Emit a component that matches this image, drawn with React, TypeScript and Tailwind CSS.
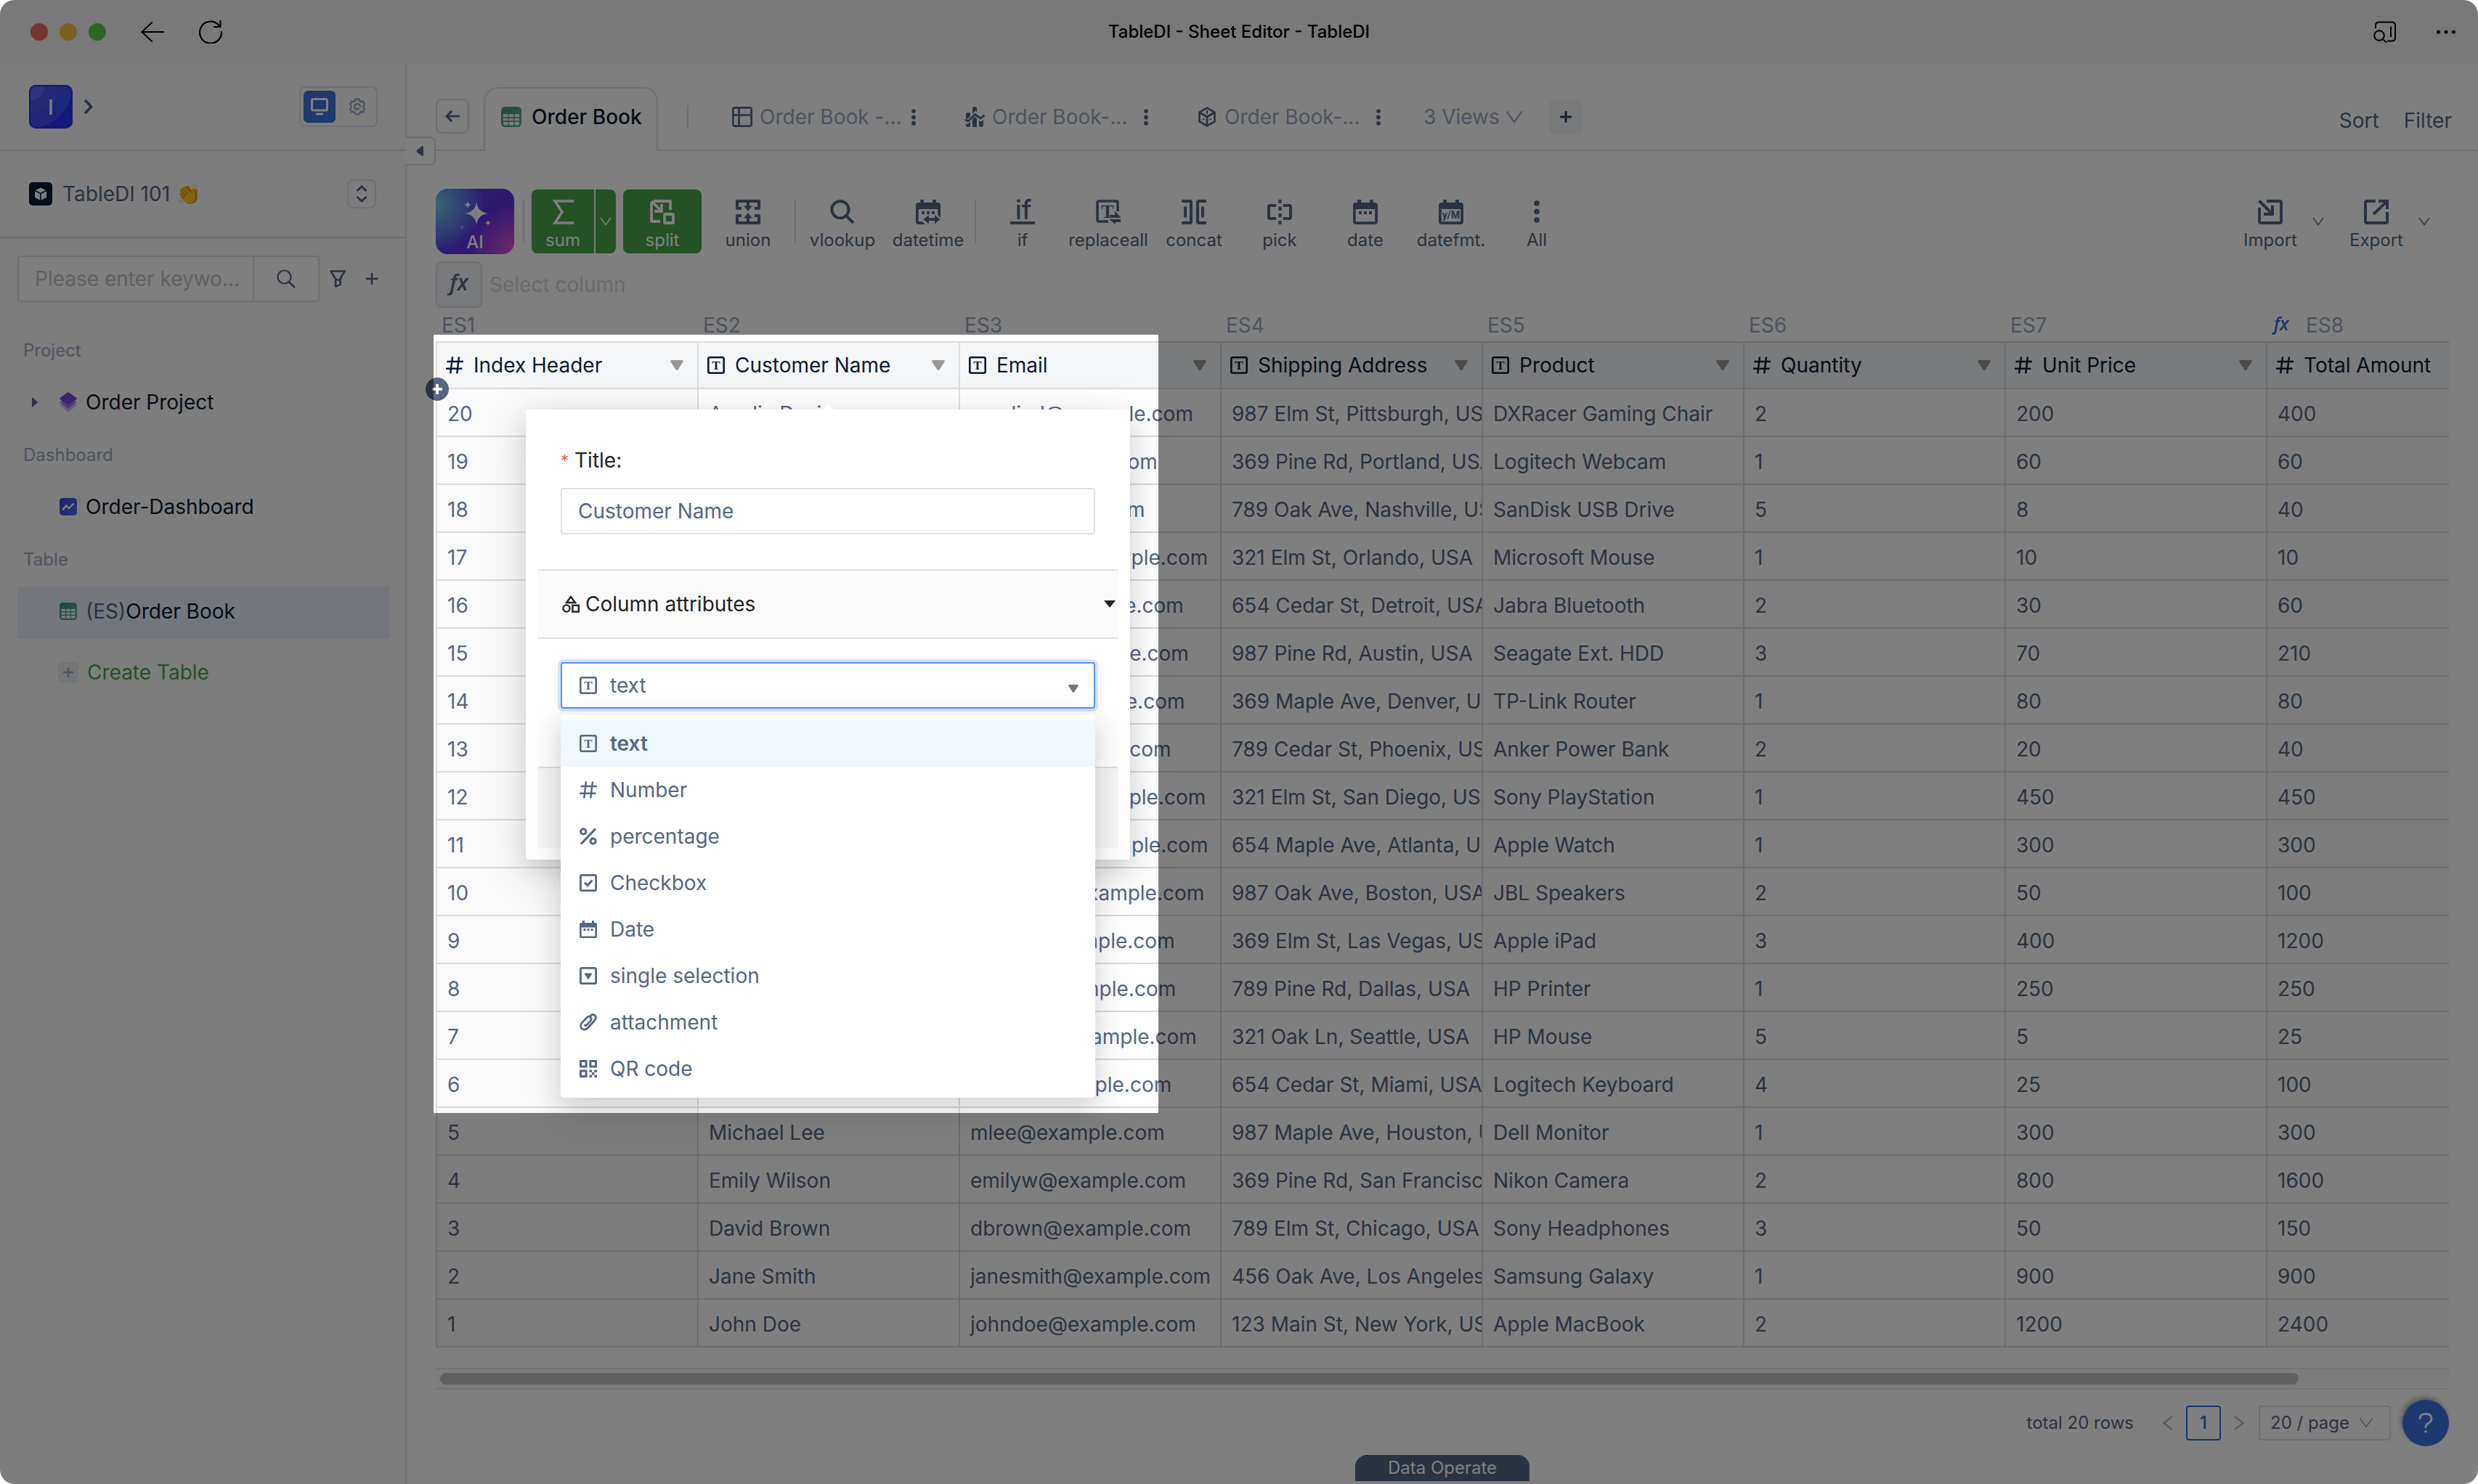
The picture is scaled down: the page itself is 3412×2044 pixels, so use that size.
import { useState } from 'react';
import type { ReactNode } from 'react';

type IconProps = { className?: string };

type ColumnType = 'number' | 'text';

type Column = {
  code: string;
  title: string;
  type: ColumnType;
  formula?: boolean;
};

const columns: Column[] = [
  { code: 'ES1', title: 'Index Header', type: 'number' },
  { code: 'ES2', title: 'Customer Name', type: 'text' },
  { code: 'ES3', title: 'Email', type: 'text' },
  { code: 'ES4', title: 'Shipping Address', type: 'text' },
  { code: 'ES5', title: 'Product', type: 'text' },
  { code: 'ES6', title: 'Quantity', type: 'number' },
  { code: 'ES7', title: 'Unit Price', type: 'number' },
  { code: 'ES8', title: 'Total Amount', type: 'number', formula: true },
];

const rows = [
  ['20', 'Amelia Davis', 'ameliad@example.com', '987 Elm St, Pittsburgh, USA', 'DXRacer Gaming Chair', '2', '200', '400'],
  ['19', 'Liam Hill', 'liam@example.com', '369 Pine Rd, Portland, USA', 'Logitech Webcam', '1', '60', '60'],
  ['18', 'Elli Hill', 'elli@example.com', '789 Oak Ave, Nashville, USA', 'SanDisk USB Drive', '5', '8', '40'],
  ['17', 'Charlotte Lee', 'charlottel@example.com', '321 Elm St, Orlando, USA', 'Microsoft Mouse', '1', '10', '10'],
  ['16', 'Oliver Brown', 'oliverb@example.com', '654 Cedar St, Detroit, USA', 'Jabra Bluetooth', '2', '30', '60'],
  ['15', 'Sophia Till', 'sophiat@example.com', '987 Pine Rd, Austin, USA', 'Seagate Ext. HDD', '3', '70', '210'],
  ['14', 'Henry Clark', 'henryc@example.com', '369 Maple Ave, Denver, USA', 'TP-Link Router', '1', '80', '80'],
  ['13', 'Noah Lee', 'noahl@example.com', '789 Cedar St, Phoenix, USA', 'Anker Power Bank', '2', '20', '40'],
  ['12', 'Benjamin Lee', 'benjamin@example.com', '321 Elm St, San Diego, USA', 'Sony PlayStation', '1', '450', '450'],
  ['11', 'Emma Tho', 'emmatho@example.com', '654 Maple Ave, Atlanta, USA', 'Apple Watch', '1', '300', '300'],
  ['10', 'James Ma', 'jamesma@example.com', '987 Oak Ave, Boston, USA', 'JBL Speakers', '2', '50', '100'],
  ['9', 'Olivia Till', 'oliviat@example.com', '369 Elm St, Las Vegas, USA', 'Apple iPad', '3', '400', '1200'],
  ['8', 'Daniel Hall', 'daniel@example.com', '789 Pine Rd, Dallas, USA', 'HP Printer', '1', '250', '250'],
  ['7', 'Jessica Hall', 'jessicah@example.com', '321 Oak Ln, Seattle, USA', 'HP Mouse', '5', '5', '25'],
  ['6', 'Sarah King', 'sarah@example.com', '654 Cedar St, Miami, USA', 'Logitech Keyboard', '4', '25', '100'],
  ['5', 'Michael Lee', 'mlee@example.com', '987 Maple Ave, Houston, USA', 'Dell Monitor', '1', '300', '300'],
  ['4', 'Emily Wilson', 'emilyw@example.com', '369 Pine Rd, San Francisco, USA', 'Nikon Camera', '2', '800', '1600'],
  ['3', 'David Brown', 'dbrown@example.com', '789 Elm St, Chicago, USA', 'Sony Headphones', '3', '50', '150'],
  ['2', 'Jane Smith', 'janesmith@example.com', '456 Oak Ave, Los Angeles, USA', 'Samsung Galaxy', '1', '900', '900'],
  ['1', 'John Doe', 'johndoe@example.com', '123 Main St, New York, USA', 'Apple MacBook', '2', '1200', '2400'],
];

/* ---------- icons ---------- */

function TextIcon({ className }: IconProps) {
  return (
    <svg viewBox="0 0 24 24" className={className} fill="currentColor">
      <rect x="1.3" y="1.3" width="21.4" height="21.4" rx="2" fill="none" stroke="currentColor" strokeWidth="2.6" />
      <text x="12" y="17.5" textAnchor="middle" fontSize="17" fontWeight="700" fontFamily="Liberation Serif, serif">T</text>
    </svg>
  );
}

function HashIcon({ className }: IconProps) {
  return (
    <svg viewBox="0 0 24 24" className={className} fill="none" stroke="currentColor" strokeWidth="2.4">
      <path d="M1.5 7H24M0 16.8H22.5M9 0.5L6.2 23.5M18 0.5L15.2 23.5" />
    </svg>
  );
}

function PercentIcon({ className }: IconProps) {
  return (
    <svg viewBox="0 0 24 24" className={className} fill="none" stroke="currentColor" strokeWidth="3">
      <circle cx="5.2" cy="5.4" r="3.6" />
      <circle cx="18.6" cy="18.6" r="3.6" />
      <path d="M22 1.5L2 22.5" strokeWidth="3.2" />
    </svg>
  );
}

function CheckboxIcon({ className }: IconProps) {
  return (
    <svg viewBox="0 0 24 24" className={className} fill="none" stroke="currentColor">
      <rect x="1.4" y="1.4" width="21.2" height="21.2" rx="1.6" strokeWidth="2.8" />
      <path d="M7 11.5L11 15.5L17.5 8.5" strokeWidth="3" />
    </svg>
  );
}

function DateSmallIcon({ className }: IconProps) {
  return (
    <svg viewBox="0 0 24 24" className={className} fill="currentColor">
      <path fillRule="evenodd" d="M2 3H4V0H7V3H17V0H20V3H22A2 2 0 0 1 24 5V22A2 2 0 0 1 22 24H2A2 2 0 0 1 0 22V5A2 2 0 0 1 2 3ZM2.6 9.4V21.4H21.4V9.4Z" />
      <path d="M5.5 11H8.5V14H5.5ZM10.5 11H13.5V14H10.5ZM15.5 11H18.5V14H15.5Z" />
    </svg>
  );
}

function SingleSelectIcon({ className }: IconProps) {
  return (
    <svg viewBox="0 0 24 24" className={className} fill="currentColor">
      <rect x="1.4" y="1.4" width="21.2" height="21.2" rx="1.6" fill="none" stroke="currentColor" strokeWidth="2.8" />
      <path d="M7 9H17L12 16.5Z" strokeLinejoin="round" stroke="currentColor" strokeWidth="1" />
    </svg>
  );
}

function AttachmentIcon({ className }: IconProps) {
  return (
    <svg viewBox="0 0 24 24" className={className} fill="none" stroke="currentColor" strokeWidth="2.8" strokeLinecap="round">
      <path d="M14.5 3.6C17 0.8 20.2 1 21.6 3C23 5 22.6 7.6 20.6 9.8L11.4 19.8C8.8 22.6 5.4 23 3.2 20.8C1 18.6 1 15.2 3.4 12.6L10 5.6C11.8 3.8 14.2 3.8 15.4 5.4C16.6 7 16.4 8.8 15 10.4L9.6 16C8.8 16.8 7.8 16.6 7.4 16" />
    </svg>
  );
}

function QrIcon({ className }: IconProps) {
  return (
    <svg viewBox="0 0 24 24" className={className} fill="currentColor">
      <path fillRule="evenodd" d="M0 0H10.6V10.6H0ZM3 3V7.6H7.6V3ZM13.4 0H24V10.6H13.4ZM16.4 3V7.6H21V3ZM0 13.4H10.6V24H0ZM3 16.4V21H7.6V16.4Z" />
      <path d="M13.4 13.4H17V17H13.4ZM20.4 13.4H24V17H20.4ZM17 17H20.4V20.4H17ZM13.4 20.4H17V24H13.4ZM20.4 20.4H24V24H20.4Z" />
    </svg>
  );
}

function SheetIcon({ className }: IconProps) {
  return (
    <svg viewBox="0 0 24 24" className={className}>
      <defs>
        <linearGradient id="sheet" x1="0" y1="0" x2="1" y2="1">
          <stop offset="0" stopColor="#3f8f88" />
          <stop offset="1" stopColor="#5cb88c" />
        </linearGradient>
      </defs>
      <rect width="24" height="24" rx="4.5" fill="url(#sheet)" />
      <path
        fill="#f4fbf8"
        d="M2.5 8.8H8V12H2.5ZM9.2 8.8H14.8V12H9.2ZM16 8.8H21.5V12H16ZM2.5 13.4H8V16.6H2.5ZM9.2 13.4H14.8V16.6H9.2ZM16 13.4H21.5V16.6H16ZM2.5 18H8V21.8H4.5Q2.5 21.8 2.5 19.8ZM9.2 18H14.8V21.8H9.2ZM16 18H21.5V19.8Q21.5 21.8 19.5 21.8H16Z"
      />
    </svg>
  );
}

function Caret({ className }: IconProps) {
  return (
    <svg viewBox="0 0 18 14" className={className} fill="currentColor">
      <path d="M1.5 0H16.5Q18.6 0.6 17.4 2.6L10.6 13Q9 14.8 7.4 13L0.6 2.6Q-0.6 0.6 1.5 0Z" />
    </svg>
  );
}

function ThinChevron({ className }: IconProps) {
  return (
    <svg viewBox="0 0 24 18" className={className} fill="none" stroke="currentColor" strokeWidth="2">
      <path d="M1.5 1.5L12 16L22.5 1.5" />
    </svg>
  );
}

function Dots({ className }: IconProps) {
  return (
    <svg viewBox="0 0 8 30" className={className} fill="currentColor">
      <circle cx="4" cy="4" r="3.8" />
      <circle cx="4" cy="15" r="3.8" />
      <circle cx="4" cy="26" r="3.8" />
    </svg>
  );
}

function Fx({ className }: IconProps) {
  return (
    <svg viewBox="0 0 32 32" className={className} fill="currentColor" aria-hidden="true">
      <text x="16" y="24" textAnchor="middle" fontSize="30" fontStyle="italic" fontWeight="600" fontFamily="Open Sans, Noto Sans, sans-serif">fx</text>
    </svg>
  );
}

function Glyph({ children }: { children: ReactNode }) {
  return (
    <svg viewBox="0 0 34 34" className="size-[34px] overflow-visible" fill="none" stroke="currentColor" strokeWidth="4">
      {children}
    </svg>
  );
}

function CalendarBody() {
  return (
    <path
      stroke="none"
      fill="currentColor"
      fillRule="evenodd"
      d="M4 4H6V0H11V4H23V0H28V4H30A4 4 0 0 1 34 8V30A4 4 0 0 1 30 34H4A4 4 0 0 1 0 30V8A4 4 0 0 1 4 4ZM3.8 13V30.2H30.2V13Z"
    />
  );
}

const glyphs: Record<string, ReactNode> = {
  sum: (
    <Glyph>
      <path d="M32 2H6L16 17L6 32H32" strokeWidth="3.6" />
    </Glyph>
  ),
  split: (
    <Glyph>
      <path d="M5 2H28V14M2 4V30H14" strokeWidth="3.8" strokeLinejoin="round" />
      <path d="M2 2L15 15M6.5 16H16V6" strokeWidth="3.8" />
      <rect x="20" y="20" width="12" height="12" rx="1" strokeWidth="3.8" />
    </Glyph>
  ),
  union: (
    <Glyph>
      <path d="M8 12H2V2H32V12H26M8 22H2V32H32V22H26" strokeLinejoin="round" />
      <path d="M17 2V10M17 32V24" />
      <path d="M11 8.5H23L17 16ZM11 25.5H23L17 18Z" fill="currentColor" stroke="none" />
    </Glyph>
  ),
  vlookup: (
    <Glyph>
      <circle cx="14" cy="13.6" r="11.6" />
      <path d="M22 22L32 32" />
    </Glyph>
  ),
  datetime: (
    <Glyph>
      <path d="M4 4H6V0H11V4H23V0H28V4H30A4 4 0 0 1 34 8V25L30.2 21V13H3.8V30.2H9L12.5 34H4A4 4 0 0 1 0 30V8A4 4 0 0 1 4 4Z" fill="currentColor" stroke="none" />
      <path d="M8 16H12V20H8ZM15 16H19V20H15ZM22 16H26V20H22Z" fill="currentColor" stroke="none" />
      <path d="M15 27.2H29" />
      <path d="M10.5 27.2L18 21V33.4ZM33.5 27.2L26 21V33.4Z" fill="currentColor" stroke="none" />
    </Glyph>
  ),
  if: (
    <Glyph>
      <path d="M0 32H34" />
      <text x="18" y="27" textAnchor="middle" fontSize="36" fontWeight="500" fontFamily="Inter, sans-serif" fill="currentColor" stroke="none">if</text>
    </Glyph>
  ),
  replaceall: (
    <Glyph>
      <path d="M17 30H4Q2 30 2 28V4Q2 2 4 2H28Q30 2 30 4V16" strokeWidth="3.6" />
      <text x="16" y="24.5" textAnchor="middle" fontSize="26" fontWeight="700" fontFamily="Liberation Serif, serif" fill="currentColor" stroke="none">T</text>
      <path d="M19 25V21H26V16L34 24V25ZM34 27V31H27V34L19 28V27Z" fill="currentColor" stroke="none" />
    </Glyph>
  ),
  concat: (
    <Glyph>
      <path d="M0 2H11.5Q13 2 13 3.5V30.5Q13 32 11.5 32H0M34 2H23.5Q22 2 22 3.5V30.5Q22 32 23.5 32H34" />
      <path d="M5 11V23M29 11V23" strokeLinecap="round" />
    </Glyph>
  ),
  pick: (
    <Glyph>
      <path d="M12 8H4Q2 8 2 10V24Q2 26 4 26H12M22 8H30Q32 8 32 10V24Q32 26 30 26H22" />
      <path d="M17.5 0V5M17.5 9.5V15M17.5 19V24.5M17.5 29V34" strokeWidth="4.4" />
    </Glyph>
  ),
  date: (
    <Glyph>
      <CalendarBody />
      <path d="M8 16H12V20H8ZM15 16H19V20H15ZM22 16H26V20H22Z" fill="currentColor" stroke="none" />
    </Glyph>
  ),
  'datefmt.': (
    <Glyph>
      <CalendarBody />
      <text x="17" y="26" textAnchor="middle" fontSize="14" fontWeight="700" fontFamily="Roboto, sans-serif" fill="currentColor" stroke="none">y/M</text>
    </Glyph>
  ),
  All: (
    <Glyph>
      <g fill="currentColor" stroke="none">
        <circle cx="17" cy="5" r="3.8" />
        <circle cx="17" cy="16.5" r="3.8" />
        <circle cx="17" cy="28" r="3.8" />
      </g>
    </Glyph>
  ),
  Import: (
    <Glyph>
      <path d="M12 2H30Q32 2 32 4V30Q32 32 30 32H4Q2 32 2 30V11" />
      <path d="M1.5 1.5L20 20M8 20H20V8" />
    </Glyph>
  ),
  Export: (
    <Glyph>
      <path d="M16 2H4Q2 2 2 4V30Q2 32 4 32H30Q32 32 32 30V17" />
      <path d="M20 2H32V13M31 3L13 20" />
    </Glyph>
  ),
};

/* ---------- title bar ---------- */

function TitleBar() {
  return (
    <header className="flex h-[88px] items-center bg-[#f2f2f2] px-[42px] text-black">
      <div className="flex flex-1 items-center">
        <div className="flex gap-4">
          <span className="size-6 rounded-full bg-[#ec6a5e]" />
          <span className="size-6 rounded-full bg-[#f4bf4f]" />
          <span className="size-6 rounded-full bg-[#61c554]" />
        </div>
        <button aria-label="Back" className="ml-12">
          <svg viewBox="0 0 32 28" className="h-7 w-8" fill="none" stroke="currentColor" strokeWidth="2.2" strokeLinecap="round" strokeLinejoin="round">
            <path d="M31 14H1M15 1L1.5 14L15 27" />
          </svg>
        </button>
        <button aria-label="Reload" className="ml-12">
          <svg viewBox="0 0 32 32" className="size-8" fill="none" stroke="currentColor" strokeWidth="2.2" strokeLinecap="round">
            <path d="M31 16A15 15 0 1 1 27.5 7M29.5 1V9H21" />
          </svg>
        </button>
      </div>
      <h1 className="text-2xl font-medium">TableDI - Sheet Editor - TableDI</h1>
      <div className="flex flex-1 items-center justify-end gap-[54px]">
        <button aria-label="Page search">
          <svg viewBox="0 0 32 30" className="h-[30px] w-8" fill="none" stroke="currentColor" strokeWidth="2">
            <path d="M3 10V6Q3 1.5 7.5 1.5H25.5Q30 1.5 30 6V23Q30 27.5 25.5 27.5H19" />
            <path d="M24 7.5V22" />
            <circle cx="8" cy="20" r="6.8" />
            <path d="M13 25L18 29.5" />
          </svg>
        </button>
        <button aria-label="More" className="-mr-3">
          <svg viewBox="0 0 28 8" className="h-2 w-7" fill="currentColor">
            <circle cx="3.5" cy="4" r="2.6" />
            <circle cx="14" cy="4" r="2.6" />
            <circle cx="24.5" cy="4" r="2.6" />
          </svg>
        </button>
      </div>
    </header>
  );
}

/* ---------- sidebar ---------- */

function SideHeading({ children }: { children: string }) {
  return <h2 className="flex h-[72px] items-center px-8 pb-0.5 text-2xl text-[#9aa9c2]">{children}</h2>;
}

function SideLink({ icon, active, arrow, children }: { icon: ReactNode; active?: boolean; arrow?: boolean; children: ReactNode }) {
  return (
    <a
      href="#"
      className={`mr-[22px] ml-6 flex h-[72px] items-center pb-1 pl-5 text-[28px] text-[#0b1a33] ${active ? 'bg-[#e6eef8]' : ''}`}
    >
      <span className="w-[38px]">
        {arrow && (
          <svg viewBox="0 0 8 14" className="h-3.5 w-2 text-[#566684]" fill="currentColor">
            <path d="M0 0L8 7L0 14Z" />
          </svg>
        )}
      </span>
      {icon}
      <span className="ml-3">{children}</span>
    </a>
  );
}

function Sidebar() {
  const [keyword, setKeyword] = useState('');

  return (
    <aside className="w-[560px] shrink-0 border-r-2 border-[#dfe1ec] bg-[#fafafa] text-[#566684]">
      <div className="flex h-[120px] items-center border-b-2 border-[#dcdcdc] pr-[38px] pl-10">
        <button aria-label="Workspace" className="flex items-center gap-[15px]">
          <svg viewBox="0 0 60 60" className="size-[60px]">
            <defs>
              <clipPath id="logo">
                <rect width="60" height="60" rx="10" />
              </clipPath>
            </defs>
            <g clipPath="url(#logo)">
              <rect width="60" height="60" fill="#2432f0" />
              <circle cx="0" cy="0" r="60" fill="#3a4cf2" />
              <circle cx="0" cy="0" r="40" fill="#4355f3" />
              <circle cx="0" cy="0" r="22" fill="#5868f5" />
            </g>
            <rect x="1" y="1" width="58" height="58" rx="9" fill="none" stroke="#2635e8" strokeWidth="2" />
            <path d="M30 20V41" stroke="#fff" strokeWidth="3.4" />
          </svg>
          <svg viewBox="0 0 13 20" className="h-5 w-[13px]" fill="none" stroke="currentColor" strokeWidth="3.6">
            <path d="M2 1L10.5 10L2 19" />
          </svg>
        </button>
        <div className="ml-auto flex h-14 w-[108px] items-center rounded-lg border-2 border-[#dfe1ec] px-1">
          <button aria-label="Desktop" className="flex h-11 w-11 items-center justify-center rounded-md bg-[#3b73db] text-white">
            <svg viewBox="0 0 24 24" className="size-6" fill="none" stroke="currentColor" strokeWidth="3">
              <rect x="1.5" y="1.5" width="21" height="15.5" rx="1.5" />
              <path d="M7 22H17" />
            </svg>
          </button>
          <button aria-label="Settings" className="flex flex-1 justify-center text-[#9aa9c2]">
            <svg viewBox="0 0 24 24" className="ml-2 size-6" fill="none" stroke="currentColor" strokeWidth="2.4" strokeLinejoin="round">
              <path d="M9 3.6L9.8 1.4H14.2L15 3.6L17.6 5.1L19.9 4.7L22 8.5L20.6 10.4V13.6L22 15.5L19.9 19.3L17.6 18.9L15 20.4L14.2 22.6H9.8L9 20.4L6.4 18.9L4.1 19.3L2 15.5L3.4 13.6V10.4L2 8.5L4.1 4.7L6.4 5.1Z" />
              <path d="M12.5 16A4 4 0 1 1 16 12.5M12 13.6L14.5 15.5" />
            </svg>
          </button>
        </div>
      </div>

      <div className="flex h-[120px] items-center border-b-2 border-[#dcdcdc] px-10">
        <svg viewBox="0 0 32 32" className="size-8">
          <rect width="32" height="32" rx="5" fill="#0b1a33" />
          <path d="M8 11.5L16 7.5L24 11.5V21L16 25L8 21Z" fill="#fff" />
          <path d="M8 11.5L16 15.5L24 11.5M16 15.5V25" fill="none" stroke="#0b1a33" strokeWidth="1.6" />
        </svg>
        <span className="ml-3.5 text-[28px]">TableDI 101 👏</span>
        <button aria-label="Switch base" className="ml-auto flex h-10 w-10 items-center justify-center rounded-lg border-2 border-[#dfe1ec]">
          <svg viewBox="0 0 16 24" className="h-6 w-4" fill="none" stroke="currentColor" strokeWidth="3">
            <path d="M1.5 8L8 1.8L14.5 8M1.5 16L8 22.2L14.5 16" />
          </svg>
        </button>
      </div>

      <form className="flex items-center px-6 pt-6 pb-8" onSubmit={(e) => e.preventDefault()}>
        <input
          type="text"
          aria-label="Search"
          value={keyword}
          onChange={(e) => setKeyword(e.target.value)}
          placeholder="Please enter keywo..."
          className="h-16 w-[326px] rounded-l border-2 border-[#dfe1ec] bg-white pl-[22px] text-[28px] placeholder:text-[#c2c2c2]"
        />
        <button aria-label="Search" className="flex h-16 w-[90px] items-center justify-center rounded-r border-2 border-l-0 border-[#dfe1ec] bg-white">
          <svg viewBox="0 0 26 26" className="size-[26px]" fill="none" stroke="currentColor" strokeWidth="2.2">
            <circle cx="10.5" cy="10.5" r="9" />
            <path d="M16.5 17L25 25" strokeWidth="2.6" />
          </svg>
        </button>
        <button aria-label="Filter" className="ml-3.5">
          <svg viewBox="0 0 22 24" className="h-6 w-[22px]" fill="none" stroke="currentColor" strokeWidth="2.6" strokeLinejoin="round">
            <path d="M1.5 1.5H20.5L14.5 12V20L8 22.5V12ZM8 13.5H14.5" />
          </svg>
        </button>
        <button aria-label="Add" className="ml-7">
          <svg viewBox="0 0 16 16" className="size-4" fill="none" stroke="currentColor" strokeWidth="2.6">
            <path d="M8 0V16M0 8H16" />
          </svg>
        </button>
      </form>

      <nav>
        <SideHeading>Project</SideHeading>
        <SideLink
          arrow
          icon={
            <svg viewBox="0 0 24 28" className="h-7 w-6">
              <path d="M0 18L12 10L24 18L12 28Z" fill="#7d50e6" opacity=".35" />
              <path d="M0 14L12 6L24 14L12 23Z" fill="#7d50e6" opacity=".6" />
              <path d="M12 0L23.4 8Q24.4 9 23.4 10L12 18L0.6 10Q-0.4 9 0.6 8Z" fill="#7a48e4" />
            </svg>
          }
        >
          Order Project
        </SideLink>
        <SideHeading>Dashboard</SideHeading>
        <SideLink
          icon={
            <svg viewBox="0 0 24 24" className="size-6">
              <defs>
                <linearGradient id="dash" x1="0" y1="0" x2="1" y2="1">
                  <stop offset="0" stopColor="#3b3fe0" />
                  <stop offset="1" stopColor="#4a78e8" />
                </linearGradient>
              </defs>
              <rect width="24" height="24" rx="4.5" fill="url(#dash)" />
              <path d="M5 15.5L9 10.5L13 14L19 8" fill="none" stroke="#fff" strokeWidth="2.4" strokeLinecap="round" strokeLinejoin="round" />
            </svg>
          }
        >
          Order-Dashboard
        </SideLink>
        <SideHeading>Table</SideHeading>
        <SideLink active icon={<SheetIcon className="size-6" />}>
          <span className="text-[#566684]">(ES)</span>Order Book
        </SideLink>
        <button className="mx-6 mt-2.5 flex h-[72px] items-center pl-14 text-[28px] text-[#4ba44c]">
          <span className="flex size-7 items-center justify-center rounded bg-[#ebeced] text-[#9aa9c2]">
            <svg viewBox="0 0 16 16" className="size-3.5" fill="none" stroke="currentColor" strokeWidth="3">
              <path d="M8 0V16M0 8H16" />
            </svg>
          </span>
          <span className="ml-3">Create Table</span>
        </button>
      </nav>
    </aside>
  );
}

/* ---------- tabs and toolbar ---------- */

function ViewTab({ icon, children }: { icon: ReactNode; children: string }) {
  return (
    <div className="flex w-[320px] items-center">
      <a href="#" className="flex items-center text-[#9aa9c2]">
        <span className="mr-2.5 text-[#566684]">{icon}</span>
        <span className="w-[192px] text-[28px] whitespace-nowrap">{children}</span>
      </a>
      <button aria-label="View menu" className="ml-4">
        <Dots className="h-[23px] w-2" />
      </button>
    </div>
  );
}

function TabBar() {
  return (
    <div className="flex h-[120px] items-end border-b-2 border-[#dfe1ec] pl-10">
      <button aria-label="Go back" className="mb-[22px] flex h-12 w-[46px] items-center justify-center rounded-lg border-2 border-[#dcdcdc]">
        <svg viewBox="0 0 20 16" className="h-4 w-5" fill="none" stroke="currentColor" strokeWidth="3">
          <path d="M20 8H2M9 1L2 8L9 15" />
        </svg>
      </button>
      <a href="#" className="-mb-0.5 ml-5 flex h-[88px] w-[240px] items-center rounded-t-[20px] border-2 border-b-0 border-[#dfe1ec] bg-white pb-2 pl-[22px] text-[28px] font-medium text-[#0b1a33]">
        <SheetIcon className="mr-3.5 size-7" />
        Order Book
      </a>
      <div className="flex h-[88px] flex-1 items-center pr-9 pb-0.5">
        <span className="ml-10 h-8 w-0.5 bg-[#dcdcdc]" />
        <div className="ml-[60px] flex">
          <ViewTab
            icon={
              <svg viewBox="0 0 28 28" className="size-7" fill="none" stroke="currentColor" strokeWidth="2.6">
                <rect x="1.4" y="1.4" width="25.2" height="25.2" rx="2" />
                <path d="M1 11.5H27M9.5 1V27" />
              </svg>
            }
          >
            Order Book -...
          </ViewTab>
          <ViewTab
            icon={
              <svg viewBox="0 0 28 28" className="size-7" fill="currentColor">
                <path d="M2 10Q2 8 5 8Q8 8 8 10V13L4.5 17L2 15.5ZM11 2Q11 0 14 0Q17 0 17 2V7L14.5 6L11 10ZM2 23L4.5 24L8 21V25Q8 28 5 28Q2 28 2 25ZM11 17L14.5 13.5L17 16V28H11ZM20 19L23 20.5L26 18V25Q26 28 23 28Q20 28 20 25Z" />
                <path d="M1 17.5L5 20L14.5 10.5L22 16L27.5 11.5" fill="none" stroke="currentColor" strokeWidth="2.8" />
              </svg>
            }
          >
            Order Book-...
          </ViewTab>
          <ViewTab
            icon={
              <svg viewBox="0 0 28 28" className="size-7" fill="none" stroke="currentColor" strokeWidth="2.8" strokeLinejoin="round">
                <path d="M14 1.6L24.5 7.6V20.4L14 26.4L3.5 20.4V7.6Z" />
                <path d="M4 8L14 14L24 8M14 14V26" />
                <path d="M14 5V10M8 18L10.5 16.5M20 18L17.5 16.5" strokeWidth="2" />
              </svg>
            }
          >
            Order Book-...
          </ViewTab>
        </div>
        <button className="-ml-2 flex items-center gap-2 text-[28px] text-[#9aa9c2]">
          3 Views <ThinChevron className="h-[18px] w-6" />
        </button>
        <button aria-label="Add view" className="ml-9 flex h-12 w-[46px] items-center justify-center rounded-lg bg-[#f2f4f7] text-[#2c3f5e]">
          <svg viewBox="0 0 16 16" className="size-4" fill="none" stroke="currentColor" strokeWidth="2.8">
            <path d="M8 0V16M0 8H16" />
          </svg>
        </button>
        <div className="mt-2.5 ml-auto flex gap-[34px] text-[28px]">
          <button>Sort</button>
          <button>Filter</button>
        </div>
      </div>
    </div>
  );
}

function Tool({ name }: { name: string }) {
  return (
    <button className="flex h-[88px] w-[108px] flex-col items-center pt-3.5 text-2xl">
      {glyphs[name]}
      <span className="mt-1.5">{name}</span>
    </button>
  );
}

function Divider() {
  return <span className="h-[60px] w-0.5 bg-[#dfe1ec]" />;
}

function Toolbar() {
  return (
    <div className="flex h-[90px] items-center justify-between pr-[66px]">
      <div className="flex items-center gap-2.5">
        <button className="mr-0.5 flex h-[90px] w-[108px] flex-col items-center justify-end rounded-2xl bg-[radial-gradient(circle_at_0%_25%,#7cc8f0_0%,#5f93e8_22%,transparent_52%),radial-gradient(circle_at_100%_95%,#e548c8_0%,#b046d8_18%,transparent_45%),linear-gradient(135deg,#5b50e8,#5a2fe0_55%,#6a34d8)] text-2xl font-medium text-white">
          <svg viewBox="0 0 44 40" className="h-10 w-11" fill="currentColor">
            <path d="M24 0Q25.5 14 40 16Q25.5 18 24 32Q22.5 18 8 16Q22.5 14 24 0Z" />
            <path d="M12 -1Q12.8 3.5 17 4Q12.8 4.5 12 9Q11.2 4.5 7 4Q11.2 3.5 12 -1Z" />
            <path d="M40 25Q40.6 28.5 44 29Q40.6 29.5 40 33Q39.4 29.500 36 29Q39.4 28.5 40 25Z" />
            <path d="M4 31Q4.6 34.5 8 35Q4.6 35.5 4 39Q3.4 35.5 0 35Q3.4 34.5 4 31Z" fill="#9a8af0" />
          </svg>
          AI
        </button>
        <Divider />
        <div className="flex h-[88px] w-[116px] overflow-hidden rounded-lg bg-[#4aa44b] text-white">
          <button className="flex w-[86px] flex-col items-center pt-3.5 text-2xl">
            {glyphs.sum}
            <span className="mt-1.5">sum</span>
          </button>
          <button aria-label="More formulas" className="flex flex-1 items-center justify-center border-l-2 border-white">
            <ThinChevron className="h-3 w-4" />
          </button>
        </div>
        <div className="rounded-lg bg-[#4aa44b] text-white">
          <Tool name="split" />
        </div>
        <Tool name="union" />
        <Divider />
        <Tool name="vlookup" />
        <Tool name="datetime" />
        <Divider />
        <Tool name="if" />
        <Tool name="replaceall" />
        <Tool name="concat" />
        <Tool name="pick" />
        <Tool name="date" />
        <Tool name="datefmt." />
        <Tool name="All" />
      </div>
      <div className="flex items-center">
        <Tool name="Import" />
        <button aria-label="Import options" className="mr-[18px] ml-1">
          <ThinChevron className="h-3 w-4" />
        </button>
        <Tool name="Export" />
        <button aria-label="Export options" className="ml-1">
          <ThinChevron className="h-3 w-4" />
        </button>
      </div>
    </div>
  );
}

/* ---------- sheet ---------- */

function Sheet() {
  return (
    <div className="overflow-hidden">
      <table className="w-[2880px] table-fixed border-separate border-spacing-0 text-left text-[28px]">
        <thead>
          <tr>
            {columns.map((col) => (
              <th key={col.code} className="h-[46px] w-[360px] p-0 pt-0.5 pl-2 font-normal text-[#9aa9c2]">
                <span className="flex items-center">
                  {col.formula && <Fx className="mr-[21px] size-[26px] text-[#2f6be0]" />}
                  {col.code}
                </span>
              </th>
            ))}
          </tr>
          <tr>
            {columns.map((col) => (
              <th key={col.title} className="h-[66px] border-t-2 border-b-2 border-l-2 border-[#dcdcdc] bg-[#f4f6f8] p-0 font-normal text-[#0b1a33]">
                <span className="flex items-center pr-[19px] pl-3">
                  {col.type === 'number' ? <HashIcon className="size-6" /> : <TextIcon className="size-6" />}
                  <span className="ml-3.5 whitespace-nowrap">{col.title}</span>
                  <Caret className="ml-auto h-3.5 w-[18px] text-[#999999]" />
                </span>
              </th>
            ))}
          </tr>
        </thead>
        <tbody className="text-[#566684]">
          {rows.map((row) => (
            <tr key={row[0]}>
              {row.map((value, i) => (
                <td
                  key={i}
                  className={`h-[66px] overflow-hidden border-b-2 border-l-2 border-[#dcdcdc] p-0 pt-1 pl-3.5 whitespace-nowrap ${i === 0 || i === 7 ? 'bg-[#fafafa]' : 'bg-white'}`}
                >
                  {value}
                </td>
              ))}
            </tr>
          ))}
        </tbody>
      </table>
    </div>
  );
}

const types = [
  { label: 'text', icon: <TextIcon className="size-6" /> },
  { label: 'Number', icon: <HashIcon className="size-6" /> },
  { label: 'percentage', icon: <PercentIcon className="size-6" /> },
  { label: 'Checkbox', icon: <CheckboxIcon className="size-6" /> },
  { label: 'Date', icon: <DateSmallIcon className="size-6" /> },
  { label: 'single selection', icon: <SingleSelectIcon className="size-6" /> },
  { label: 'attachment', icon: <AttachmentIcon className="size-6" /> },
  { label: 'QR code', icon: <QrIcon className="size-6" /> },
];

function ColumnPopover() {
  const [title, setTitle] = useState('Customer Name');
  const [type, setType] = useState('text');
  const current = types.find((t) => t.label === type) ?? types[0];

  return (
    <div className="absolute top-[140px] left-[124px] w-[832px] rounded bg-white px-4 pb-4 text-[28px] text-[#566684] shadow-[0_12px_32px_rgba(0,0,0,0.12),0_18px_64px_16px_rgba(0,0,0,0.07)]">
      <span className="absolute -top-2 left-[408px] h-2 w-4 bg-white [clip-path:polygon(50%_0,100%_100%,0_100%)]" />
      <div className="px-8 pt-12 pb-12">
        <label htmlFor="column-title" className="flex h-11 items-center text-[#222222]">
          <span className="mr-2 text-[22px] text-[#f05b56]">*</span>
          Title:
        </label>
        <input
          id="column-title"
          value={title}
          onChange={(e) => setTitle(e.target.value)}
          className="mt-4 block h-16 w-full rounded border-2 border-[#dfe1ec] px-[22px]"
        />
      </div>
      <button className="flex h-24 w-full items-center rounded-t border-y-2 border-[#dfe1ec] bg-[#fafafa] pl-[34px] text-[#222222]">
        <svg viewBox="0 0 24 24" className="mr-2 size-6" fill="none" stroke="currentColor" strokeWidth="2.4">
          <path d="M12 2L18 10H6Z" />
          <circle cx="6" cy="18" r="4.6" />
          <rect x="14.4" y="13.8" width="8.4" height="8.8" />
        </svg>
        Column attributes
        <svg viewBox="0 0 16 10" className="mr-1 ml-auto h-2.5 w-4" fill="currentColor">
          <path d="M0 0H16L8 10Z" />
        </svg>
      </button>
      <div className="relative mx-8 mt-8 mb-20 h-16">
        <select
          aria-label="Column type"
          value={type}
          onChange={(e) => setType(e.target.value)}
          className="h-full w-full appearance-none rounded border-2 border-[#5a94ee] bg-white pl-[66px] ring-4 ring-[#d6e3fa]"
        >
          {types.map((t) => (
            <option key={t.label}>{t.label}</option>
          ))}
        </select>
        <span className="pointer-events-none absolute top-5 left-[26px]">{current.icon}</span>
        <Caret className="pointer-events-none absolute top-[31px] right-[23px] h-[11px] w-[14px] text-[#777777]" />
        <ul
          role="listbox"
          className="absolute top-[72px] right-0 left-0 z-10 rounded bg-white py-2 shadow-[0_12px_32px_rgba(0,0,0,0.12),0_18px_56px_16px_rgba(0,0,0,0.06)]"
        >
          {types.map((t) => (
            <li
              key={t.label}
              role="option"
              aria-selected={t.label === type}
              onClick={() => setType(t.label)}
              className={`flex h-16 items-center gap-[18px] pl-[26px] ${t.label === type ? 'bg-[#eff7ff] font-semibold' : ''}`}
            >
              {t.icon}
              {t.label}
            </li>
          ))}
        </ul>
      </div>
      <div className="h-28 rounded-t border-t-2 border-[#dfe1ec] bg-[#f7f7f7]" />
    </div>
  );
}

function Pagination() {
  return (
    <div className="mt-3.5 flex items-center justify-end pr-10 text-2xl">
      <span>total 20 rows</span>
      <button aria-label="Previous page" className="ml-10 text-[#b5b5b5]">
        <svg viewBox="0 0 14 20" className="h-5 w-3.5" fill="none" stroke="currentColor" strokeWidth="2.2">
          <path d="M13 1L1.5 10L13 19" />
        </svg>
      </button>
      <button className="ml-[18px] size-12 rounded border-2 border-[#2f6be0] font-medium text-[#2f6be0]">1</button>
      <button aria-label="Next page" className="ml-[18px] text-[#b5b5b5]">
        <svg viewBox="0 0 14 20" className="h-5 w-3.5" fill="none" stroke="currentColor" strokeWidth="2.2">
          <path d="M1 1L12.5 10L1 19" />
        </svg>
      </button>
      <div className="relative ml-5">
        <select aria-label="Rows per page" className="h-12 w-[182px] appearance-none rounded border-2 border-[#dfe1ec] pl-3.5">
          <option>20 / page</option>
        </select>
        <ThinChevron className="pointer-events-none absolute top-4 right-6 h-[15px] w-5 text-[#b5b5b5]" />
      </div>
      <button aria-label="Help" className="ml-4 flex size-16 items-center justify-center rounded-full bg-[#3a72e0] text-white shadow-[-2px_-4px_6px_rgba(0,0,0,0.3)]">
        <svg viewBox="0 0 20 28" className="h-7 w-5" fill="none" stroke="currentColor" strokeWidth="2.8" strokeLinecap="round">
          <path d="M2 8Q2 1.5 10 1.5Q18 1.5 18 8Q18 11.5 14 14Q10 16 10 20" />
          <circle cx="10" cy="25.8" r="1" fill="currentColor" strokeWidth="1.6" />
        </svg>
      </button>
    </div>
  );
}

export default function App() {
  return (
    <div className="bg-white font-['Inter','Noto_Sans_CJK_SC',sans-serif]">
      <div className="relative flex min-h-screen flex-col overflow-hidden rounded-[20px] bg-white">
        <TitleBar />
        <div className="flex flex-1">
          <Sidebar />
          <main className="relative flex min-w-0 flex-1 flex-col text-[#566684]">
            <TabBar />
            <button
              aria-label="Collapse sidebar"
              className="absolute top-[100px] -left-0.5 flex h-10 w-[42px] items-center justify-center rounded-r-lg border-2 border-l-0 border-[#dcdcdc] bg-white"
            >
              <svg viewBox="0 0 10 14" className="h-3.5 w-2.5" fill="currentColor">
                <path d="M10 1V13Q9 14.5 7.5 13.5L0.8 8Q0 7 0.8 6L7.5 0.5Q9 -0.5 10 1Z" />
              </svg>
            </button>
            <div className="pt-[52px] pl-10">
              <Toolbar />
              <div className="mt-2.5 flex items-center gap-2.5">
                <button aria-label="Formula" className="flex size-16 items-center justify-center rounded-lg border-2 border-[#dfe1ec] bg-[#f1f4f8]">
                  <Fx className="size-8" />
                </button>
                <input
                  aria-label="Formula"
                  placeholder="Select column"
                  className="flex-1 text-[28px] placeholder:text-[#d2d6de]"
                />
              </div>
            </div>
            <div className="relative mr-10 ml-10">
              <Sheet />
              <button
                aria-label="Insert column"
                className="absolute top-24 -left-3.5 flex size-8 items-center justify-center rounded-full bg-[#566684] text-white"
              >
                <svg viewBox="0 0 16 16" className="size-4" fill="none" stroke="currentColor" strokeWidth="3.6">
                  <path d="M8 1V15M1 8H15" />
                </svg>
              </button>
              <ColumnPopover />
              {/* dims everything but the column being edited */}
              <div className="pointer-events-none absolute top-[37px] -left-[3px] z-20 h-[1072px] w-[998px] shadow-[0_0_0_4000px_rgba(0,0,0,0.5)]" />
            </div>
            <div className="mt-7 mr-10 ml-10 flex h-[30px] items-center border-y-2 border-[#eaeaea] bg-[#fafafa] px-1.5">
              <div className="h-4 w-[92.7%] rounded-full bg-[#c1c1c1]" />
            </div>
            <Pagination />
            <button className="mx-auto mt-auto mb-1 h-9 w-[240px] rounded-t-2xl bg-[#566684] text-2xl leading-9 text-white">
              Data Operate
            </button>
          </main>
        </div>
      </div>
    </div>
  );
}
